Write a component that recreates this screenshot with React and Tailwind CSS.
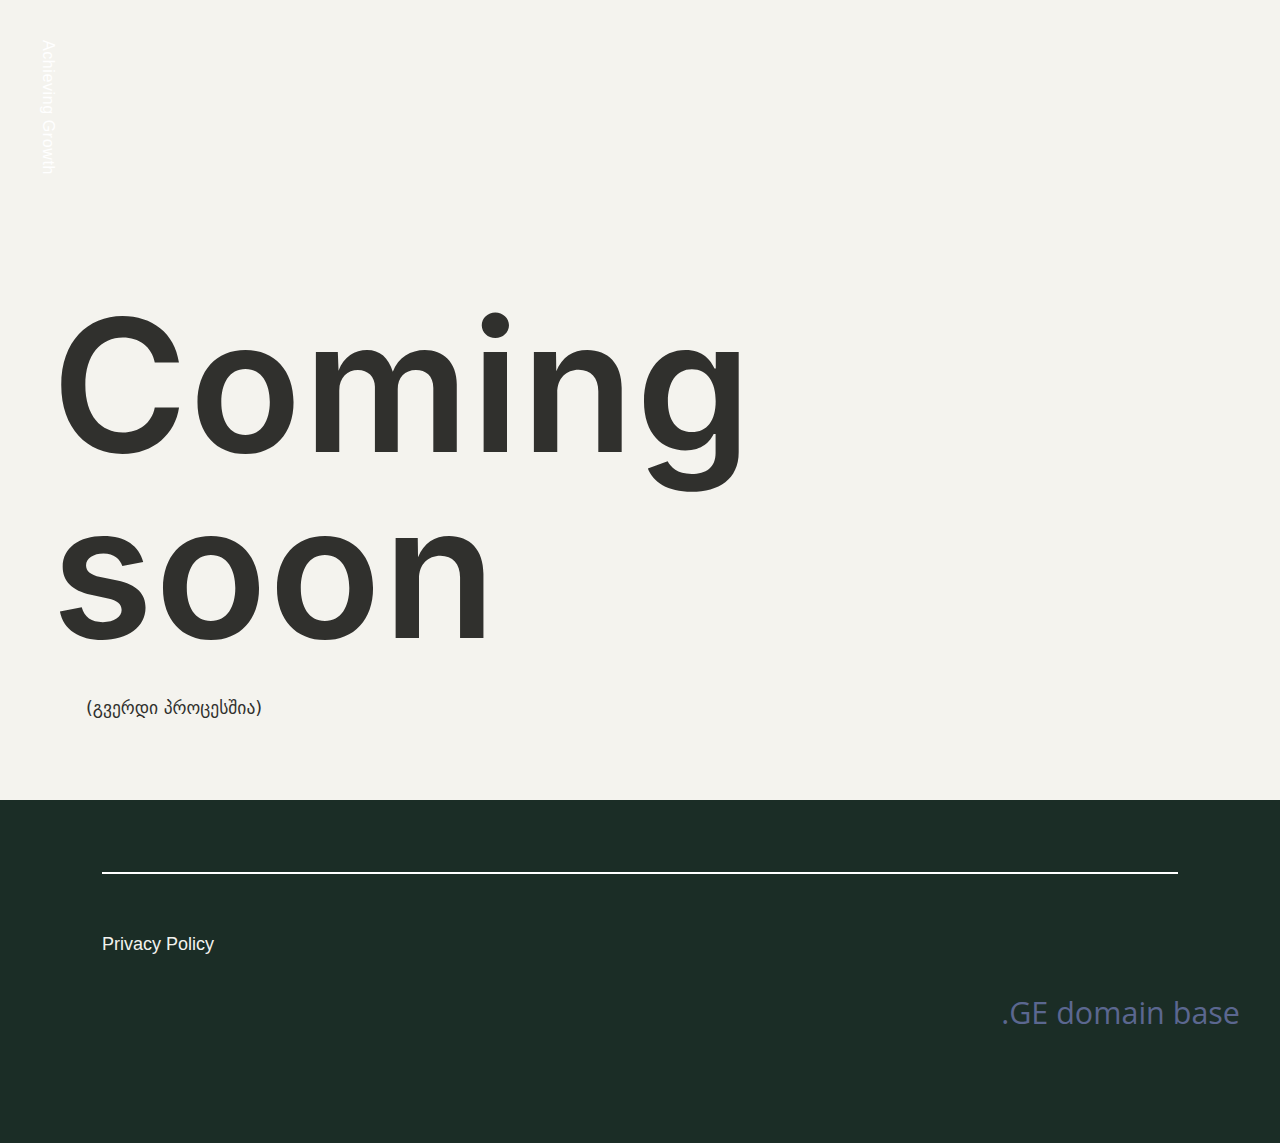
export default function App() {
  return (
    <div className="w-[1280px] min-h-[1143px] flex flex-col">
      <div className="h-[800px] bg-[#f4f3ee] flex flex-col relative">
        <div className="pl-[40px] pt-[40px] h-[300px]">
          <div
            className="text-[#ffffff] text-[16px] [writing-mode:vertical-rl] leading-[16px] tracking-[0.6px]"
            style={{ fontFamily: '"Liberation Sans", Arial, sans-serif' }}
          >
            Achieving Growth
          </div>
        </div>
        <h1
          className="pl-[52px] mt-[-8px] text-[#30302d] text-[184px] leading-[186px] font-semibold tracking-[2px]"
          style={{ fontFamily: 'Inter, "Noto Sans", sans-serif' }}
        >
          Coming
          <br />
          soon
        </h1>
        <div
          className="pl-[86px] mt-[31px] text-[#30302d] text-[17.5px]"
          style={{ fontFamily: '"DejaVu Sans", "Noto Sans", sans-serif' }}
        >
          (გვერდი პროცესშია)
        </div>
      </div>
      <div className="h-[343px] bg-[#1b2d26] flex flex-col px-[102px]">
        <div className="mt-[72px] h-[2px] bg-[#ffffff]" />
        <div
          className="mt-[57px] text-[#f2f2ee] text-[18px]"
          style={{ fontFamily: '"Liberation Sans", Arial, sans-serif' }}
        >
          Privacy Policy
        </div>
        <div className="flex justify-end mr-[-62px] mt-[32px]">
          <div
            className="text-[#5b6790] text-[30.5px]"
            style={{ fontFamily: '"Open Sans", sans-serif' }}
          >
            .GE domain base
          </div>
        </div>
      </div>
    </div>
  );
}
